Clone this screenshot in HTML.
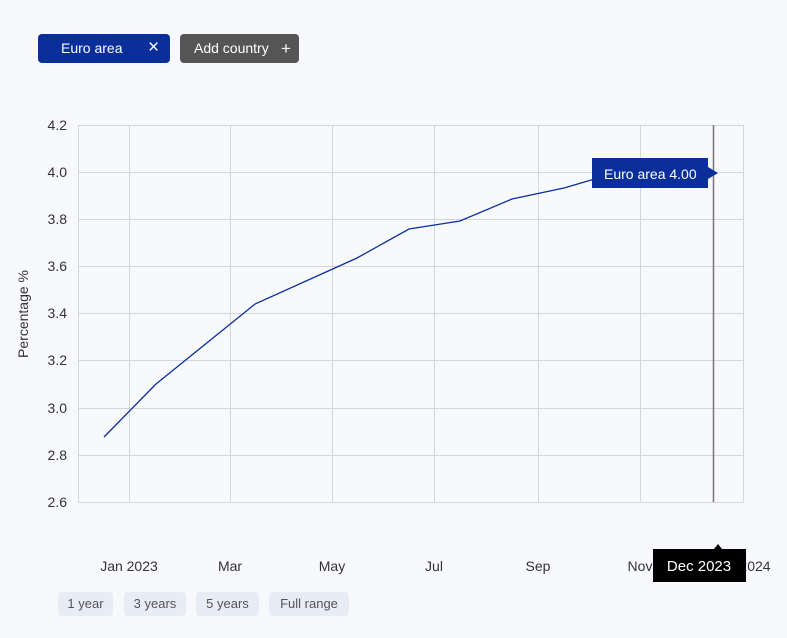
<!DOCTYPE html>
<html><head><style>
body{margin:0;width:787px;height:638px;background:#f8f9fd;font-family:"Liberation Sans",sans-serif;position:relative;overflow:hidden}
.b{position:absolute;border-radius:4px;color:#fff;font-size:14px;line-height:29px;height:29px}
.r{position:absolute;top:592px;height:24px;line-height:24px;background:#e8ecf5;border-radius:4px;color:#555;font-size:13px;text-align:center}
</style></head><body>
<div class="b" style="left:38px;top:34px;width:132px;background:#0a2f9b"><span style="position:absolute;left:23px">Euro area</span><span style="position:absolute;left:110px;font-size:19px;line-height:28px">×</span></div>
<div class="b" style="left:180px;top:34px;width:119px;background:#555"><span style="position:absolute;left:14px">Add country</span><span style="position:absolute;left:101px;font-size:17px">+</span></div>
<svg width="787" height="638" style="position:absolute;left:0;top:0" font-family="Liberation Sans, sans-serif">
<g stroke="#d4d6dc" stroke-width="1">
<line x1="78" y1="125.5" x2="744" y2="125.5"/><line x1="78" y1="172.5" x2="744" y2="172.5"/><line x1="78" y1="219.5" x2="744" y2="219.5"/><line x1="78" y1="266.5" x2="744" y2="266.5"/><line x1="78" y1="313.5" x2="744" y2="313.5"/><line x1="78" y1="360.5" x2="744" y2="360.5"/><line x1="78" y1="408.5" x2="744" y2="408.5"/><line x1="78" y1="455.5" x2="744" y2="455.5"/><line x1="78" y1="502.5" x2="744" y2="502.5"/>
<line x1="78.5" y1="125" x2="78.5" y2="502"/><line x1="129.5" y1="125" x2="129.5" y2="502"/><line x1="230.5" y1="125" x2="230.5" y2="502"/><line x1="332.5" y1="125" x2="332.5" y2="502"/><line x1="434.5" y1="125" x2="434.5" y2="502"/><line x1="538.5" y1="125" x2="538.5" y2="502"/><line x1="640.5" y1="125" x2="640.5" y2="502"/><line x1="743.5" y1="125" x2="743.5" y2="502"/>
</g>
<g font-size="14" fill="#333" text-anchor="end">
<text x="67" y="130">4.2</text><text x="67" y="177">4.0</text><text x="67" y="224">3.8</text><text x="67" y="271">3.6</text><text x="67" y="318">3.4</text><text x="67" y="365">3.2</text><text x="67" y="413">3.0</text><text x="67" y="460">2.8</text><text x="67" y="507">2.6</text>
</g>
<text transform="translate(28,314) rotate(-90)" font-size="14" fill="#333" text-anchor="middle">Percentage %</text>
<g font-size="14" fill="#333" text-anchor="middle">
<text x="129" y="571">Jan 2023</text><text x="230" y="571">Mar</text><text x="332" y="571">May</text><text x="434" y="571">Jul</text><text x="538" y="571">Sep</text><text x="640" y="571">Nov</text><text x="755" y="571">2024</text>
</g>
<polyline fill="none" stroke="#0a2f9b" stroke-width="1.3" points="104,437 156,384 255,304 357,258 409,229 460,221 512,199 564,188 615,173 667,160 713,172"/>
<line x1="713.5" y1="125" x2="713.5" y2="502" stroke="#777" stroke-width="1.5"/>
<path d="M592,158 H708 V167 L718,173 L708,179 V188 H592 Z" fill="#0a2f9b"/>
<text x="604" y="179" font-size="14" fill="#fff">Euro area 4.00</text>
<path d="M653,549 H714 L718,544 L722,549 H746 V582 H653 Z" fill="#000"/>
<text x="699" y="571" font-size="15" fill="#fff" text-anchor="middle">Dec 2023</text>
</svg>
<div class="r" style="left:58px;width:55px">1 year</div>
<div class="r" style="left:124px;width:62px">3 years</div>
<div class="r" style="left:196px;width:63px">5 years</div>
<div class="r" style="left:269px;width:80px">Full range</div>
</body></html>
